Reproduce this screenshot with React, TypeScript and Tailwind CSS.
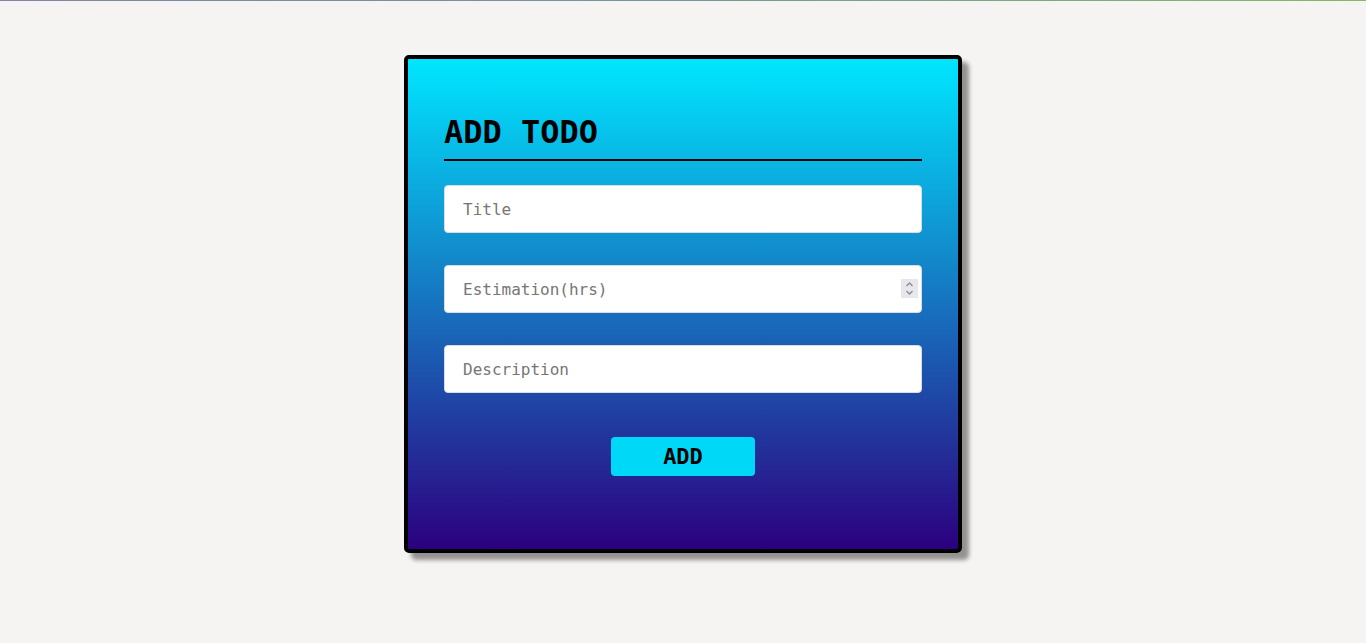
import { useState } from "react";

export default function App() {
  const [title, setTitle] = useState("");
  const [hours, setHours] = useState("");
  const [desc, setDesc] = useState("");

  return (
    <div className="min-h-[643px] bg-[#f5f4f2] font-['DejaVu_Sans_Mono',monospace]">
      {/* top strip */}
      <div className="h-px w-full bg-gradient-to-r from-[#8284a8] via-[#6f9a9a] to-[#86b864]" />

      <div className="flex justify-center pt-[54px]">
        <form
          onSubmit={(e) => e.preventDefault()}
          className="w-[558px] rounded-[5px] border-4 border-black bg-[linear-gradient(to_bottom,#00e6ff,#2c007f)] px-9 pt-[55px] pb-[73px] shadow-[7px_7px_4px_rgba(0,0,0,0.4)]"
        >
          <h1 className="border-b-2 border-black pb-2 text-[32px] font-bold leading-[37px] text-black">
            ADD TODO
          </h1>

          <div className="mt-6 flex flex-col gap-8">
            <input
              value={title}
              onChange={(e) => setTitle(e.target.value)}
              placeholder="Title"
              className="h-12 w-full rounded-[4px] border border-[#dcdcdc] bg-white px-[18px] text-base text-black outline-none placeholder:text-[#767676]"
            />

            {/* Estimation field, with a spinner */}
            <div className="relative">
              <input
                value={hours}
                onChange={(e) => setHours(e.target.value.replace(/[^0-9.]/g, ""))}
                placeholder="Estimation(hrs)"
                className="h-12 w-full rounded-[4px] border border-[#dcdcdc] bg-white px-[18px] text-base text-black outline-none placeholder:text-[#767676]"
              />
              <div className="absolute right-[4px] top-[14px] flex h-[19px] w-[17px] flex-col items-center justify-center bg-[#e8e8ec]">
                <svg width="9" height="15" viewBox="0 0 9 15" fill="none" stroke="#8a8a96" strokeWidth="1.3">
                  <path d="M1.5 5 L4.5 2 L7.5 5" />
                  <path d="M1.5 10 L4.5 13 L7.5 10" />
                </svg>
              </div>
            </div>

            <input
              value={desc}
              onChange={(e) => setDesc(e.target.value)}
              placeholder="Description"
              className="h-12 w-full rounded-[4px] border border-[#dcdcdc] bg-white px-[18px] text-base text-black outline-none placeholder:text-[#767676]"
            />
          </div>

          <div className="mt-[44px] flex justify-center">
            <button
              type="submit"
              className="h-[39px] w-[144px] rounded-[4px] bg-[#00d8f8] text-[22px] font-bold text-black"
            >
              ADD
            </button>
          </div>
        </form>
      </div>
    </div>
  );
}
